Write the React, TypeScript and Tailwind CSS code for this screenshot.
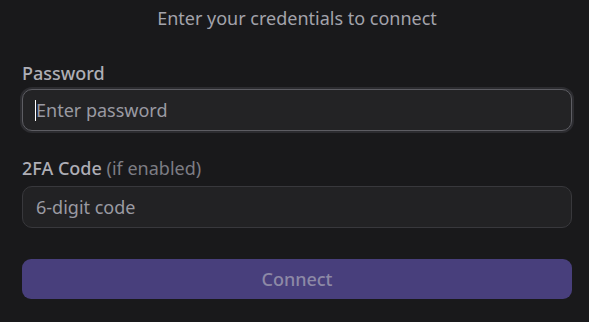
export default function App() {
  return (
    <div
      className="min-h-[322px] w-full bg-[#19191b] pl-[22px] pr-[17px] pt-[5px] text-[18px] leading-[26px]"
      style={{ fontFamily: '"Noto Sans", "Open Sans", sans-serif' }}
    >
      <p className="text-center text-[#a3a3ab]">Enter your credentials to connect</p>

      <div className="mt-[29px] flex flex-col">
        <label className="mb-[3px] font-medium text-[#aeaeb6]">Password</label>
        <div className="relative">
          <input
            type="password"
            placeholder="Enter password"
            className="h-[42px] w-full rounded-[10px] border border-[#5d5d63] bg-[#232325] px-[13px] text-[#e4e4e8] outline-none ring-2 ring-[#2c2c30] placeholder:text-[#9a9aa2]"
          />
          {/* text caret of the focused field */}
          <span className="absolute left-[13px] top-[11px] h-[21px] w-px bg-white" />
        </div>
      </div>

      <div className="mt-[24px] flex flex-col">
        <label className="mb-[5px] font-medium text-[#aeaeb6]">
          2FA Code <span className="font-normal text-[#7d7d84]">(if enabled)</span>
        </label>
        <input
          type="text"
          placeholder="6-digit code"
          className="h-[42px] w-full rounded-[10px] border border-[#38383c] bg-[#222224] px-[13px] text-[#e4e4e8] outline-none placeholder:text-[#9a9aa2]"
        />
      </div>

      <button className="mt-[31px] h-[40px] w-full rounded-[9px] bg-[#483f7c] font-medium text-[#8d89a6]">
        Connect
      </button>
    </div>
  );
}
